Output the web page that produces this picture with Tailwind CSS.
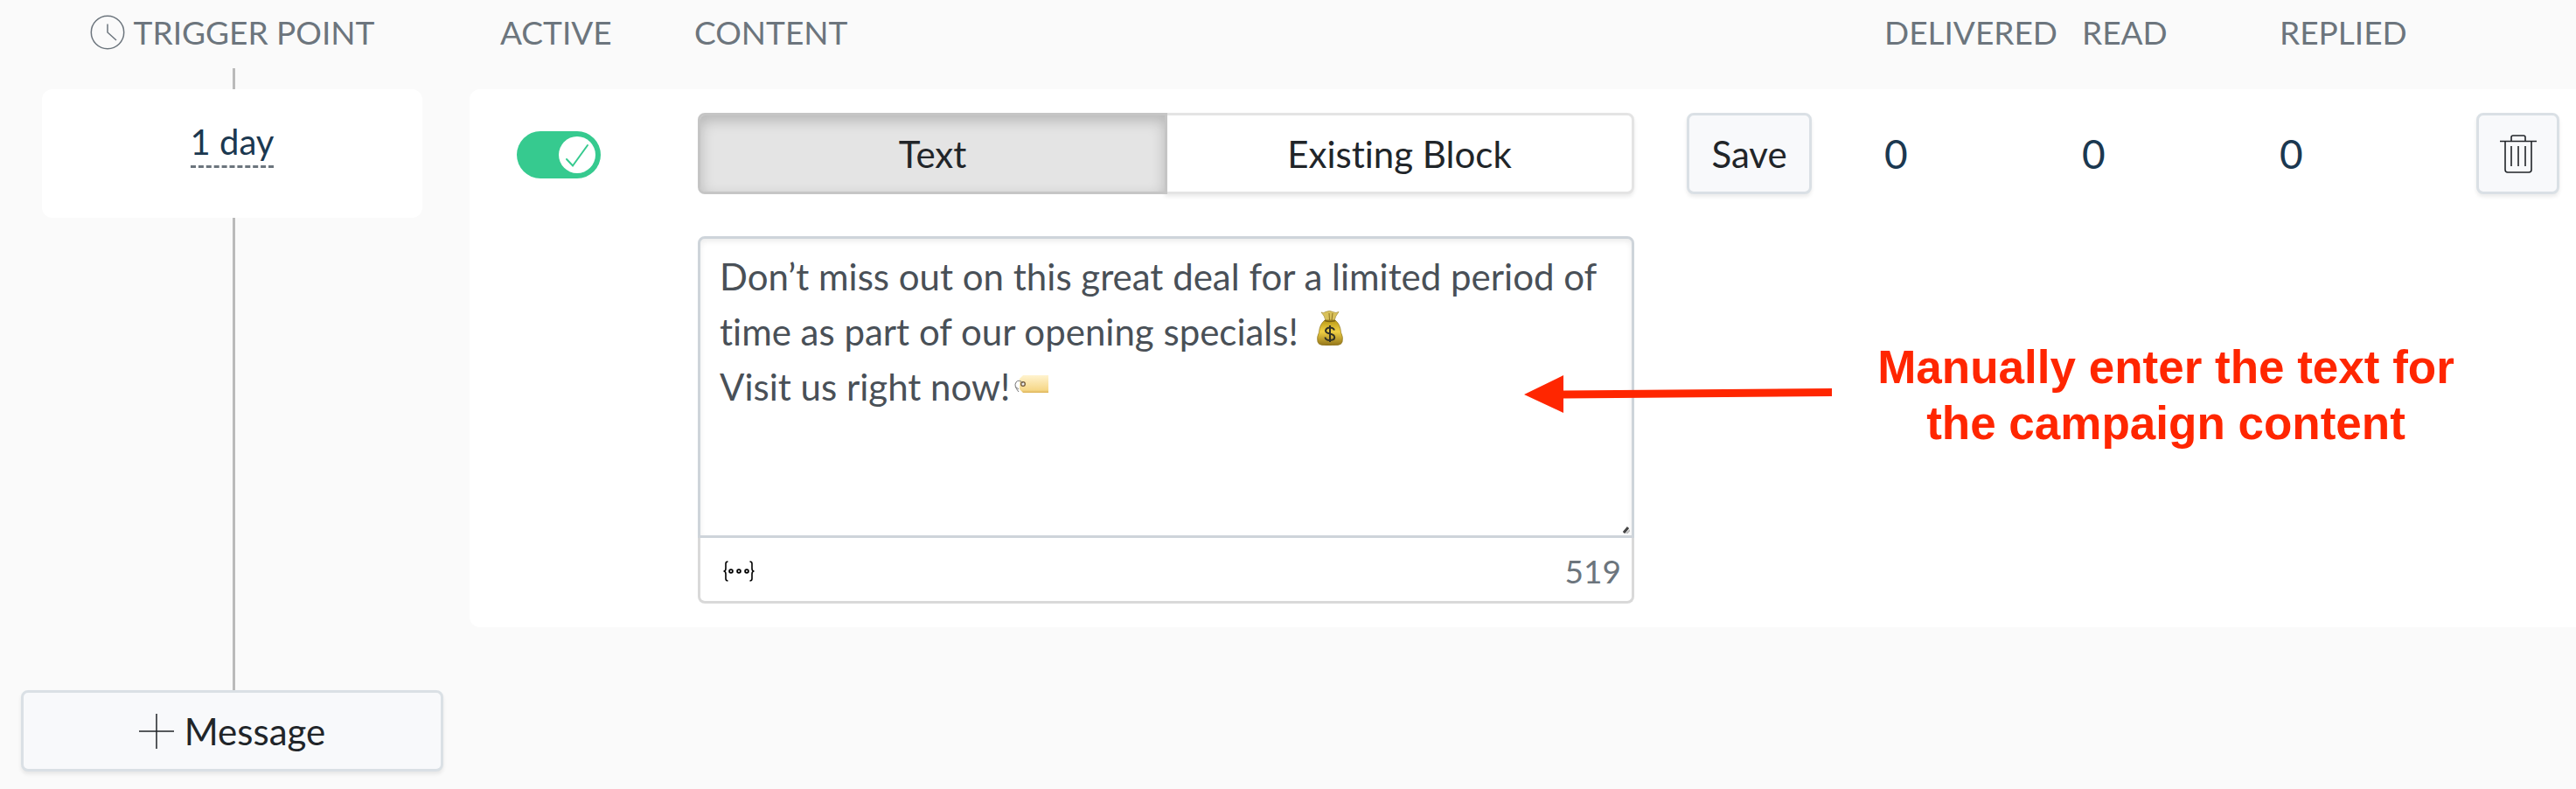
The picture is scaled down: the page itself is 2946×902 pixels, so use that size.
<!DOCTYPE html>
<html lang="en">
<head>
  <meta charset="UTF-8" />
  <meta name="viewport" content="width=device-width, initial-scale=1.0" />
  <title>Campaign Messages</title>
  <script src="https://cdn.jsdelivr.net/npm/@tailwindcss/browser@4"></script>
</head>
<body class="bg-[#fafafa] text-[#212529] font-['Lato',sans-serif] text-[42px] leading-[60px] [font-variant-ligatures:none]">
<div class="flex min-h-screen">

  <!-- Timeline -->
  <aside class="flex w-[531px] shrink-0 flex-col px-6 pb-5">
    <h2 class="mb-1 flex items-center justify-center gap-2.5 py-4 text-[37px] leading-[42px] text-[#6c757d]">
      <svg class="h-10 w-10" viewBox="0 0 40 40" fill="none" stroke="currentColor" stroke-width="1.5">
        <circle cx="20" cy="20" r="18.7" />
        <path d="M20 10.500V20l10 9" />
      </svg>
      TRIGGER POINT
    </h2>
    <div class="ml-auto h-6 w-1/2 border-l-[3px] border-[#bababa]"></div>
    <div class="mx-6 flex h-[147px] justify-center rounded-xl bg-white pt-[30px]">
      <a href="#" class="h-[60px] border-b-[3px] border-dashed border-[#6c757d] text-[40px] text-[#1b3850]">1 day</a>
    </div>
    <div class="ml-auto w-1/2 flex-1 border-l-[3px] border-[#bababa]"></div>
    <button class="flex h-[93px] items-center justify-center gap-3 rounded-lg border-[3px] border-[#dae0e5] bg-[#f8f9fb] shadow-[0_3px_4px_rgba(0,0,0,0.08)]">
      <svg class="h-10 w-10" viewBox="0 0 40 40" fill="none" stroke="currentColor" stroke-width="1.5">
        <path d="M20 0v40M0 20h40" />
      </svg>
      Message
    </button>
  </aside>

  <!-- Messages -->
  <main class="min-w-0 flex-1 pl-1.5">
    <div class="mb-7 grid grid-cols-[222px_1fr_226px_226px_226px_225px_114px] py-4 pl-[35px] text-[37px] leading-[42px] text-[#6c757d]">
      <span>ACTIVE</span>
      <span class="col-span-2">CONTENT</span>
      <span>DELIVERED</span>
      <span>READ</span>
      <span>REPLIED</span>
    </div>

    <section class="relative grid grid-cols-[261px_1fr_226px_226px_226px_225px_114px] rounded-l-xl bg-white py-[27px]">
      <!-- Active switch -->
      <div class="pt-[21px] pl-[54px]">
        <label class="flex h-[54px] w-24 items-center justify-end rounded-full bg-[#36ca8f] pr-1.5">
          <input type="checkbox" checked aria-label="Active" class="sr-only" />
          <svg class="h-[42px] w-[42px]" viewBox="0 0 42 42" fill="none">
            <circle cx="21" cy="21" r="21" fill="#fff" />
            <path d="M9 26l7 7.500L33 10" stroke="#36ca8f" stroke-width="2" stroke-linecap="round" />
          </svg>
        </label>
      </div>

      <!-- Content editor -->
      <div class="pr-[60px]">
        <div class="mb-12 flex h-[93px]">
          <button class="relative z-10 flex-1 rounded-l-lg border-[3px] border-[#c5c5c5] bg-[#e4e4e4] shadow-[inset_0_6px_16px_rgba(0,0,0,0.2)]">Text</button>
          <button class="-ml-[3px] flex-1 rounded-r-lg border-[3px] border-[#e4e4e4] bg-white shadow-[0_3px_4px_rgba(0,0,0,0.08)]">Existing Block</button>
        </div>
        <div class="relative">
          <textarea aria-label="Message text" class="block h-[345px] w-full resize-none overflow-hidden rounded-t-lg border-[3px] border-[#ced4da] px-[22px] py-3 leading-[63px] text-[#495057] shadow-[inset_0_3px_6px_rgba(0,0,0,0.08)]">Don’t miss out on this great deal for a limited period of time as part of our opening specials!
Visit us right now!</textarea>
          <!-- Money bag -->
          <svg class="absolute top-[85px] left-[708px] h-10 w-[30px]" viewBox="0 0 30 40">
            <defs>
              <linearGradient id="bag" x1="0" y1="0" x2="0" y2="1">
                <stop offset="0" stop-color="#b99a17" />
                <stop offset=".45" stop-color="#f0d044" />
                <stop offset="1" stop-color="#92741a" />
              </linearGradient>
            </defs>
            <path d="M5 2q3 1.500 5-.5 5-2 8 0 4 2 7 0-4 5-5 10H10Q9 6 5 2z" fill="#d9c15a" stroke="#a58d35" stroke-width=".7" />
            <path d="M14 3l.5 8M18 3l-1 8" stroke="#8f7523" stroke-width="1" />
            <path d="M9 11h12q6 5 6.500 14 3 5 1.500 11-1 3-5 3.500-9 1-18 0-4-.5-5-3.500-1.500-6 1.500-11Q3 16 9 11z" fill="url(#bag)" stroke="#8c731c" stroke-width=".7" />
            <path d="M9 11.500q6 2 12 0" fill="none" stroke="#7a6215" stroke-width="1.500" />
            <path d="M20 22.500q-1-3-5-3t-5 3.200q0 2.800 5 3.800t5.200 4q0 3.500-5.200 3.500t-5.500-3.500M15 17v19" fill="none" stroke="#2f3026" stroke-width="2" />
          </svg>
          <!-- Price tag -->
          <svg class="absolute top-[158px] left-[362px] h-[22px] w-10" viewBox="0 0 40 22">
            <defs>
              <linearGradient id="tag" x1="0" y1="0" x2="0" y2="1">
                <stop offset="0" stop-color="#fff3cf" />
                <stop offset=".85" stop-color="#f6d787" />
                <stop offset="1" stop-color="#dcb255" />
              </linearGradient>
            </defs>
            <path d="M10 1h29v20H10l-4-4V5z" fill="url(#tag)" />
            <circle cx="10" cy="11" r="2.300" fill="#eee" stroke="#6e5638" stroke-width="1.300" />
            <path d="M10 10Q5 5 2 9t3 11M1 14l4 3" fill="none" stroke="#777" stroke-width="1" />
          </svg>
          <!-- Resize grip -->
          <svg class="absolute right-[5px] bottom-[5px] h-2 w-2" viewBox="0 0 8 8" fill="none">
            <path d="M1 7l5-6" stroke="#444" stroke-width="3" />
            <path d="M4 8l4-4" stroke="#bbb" stroke-width="2" />
          </svg>
        </div>
        <div class="flex h-[75px] items-center justify-between rounded-b-lg border-[3px] border-t-0 border-[#d9d9d9] pt-1 pr-3 pl-[26px] text-[37px] text-[#6c757d]">
          <button aria-label="Insert attribute">
            <svg class="h-6 w-9" viewBox="0 0 36 24" fill="none" stroke="#000">
              <path d="M5.500 1Q3 1 3 3.500V9q0 3-2.500 3Q3 12 3 15v5.500Q3 23 5.500 23M30.500 1Q33 1 33 3.500V9q0 3 2.500 3-2.500 0-2.500 3v5.500q0 2.500-2.500 2.500" stroke-width="1.600" />
              <g stroke-width="1.800">
                <circle cx="9" cy="12" r="1.900" />
                <circle cx="18" cy="12" r="1.900" />
                <circle cx="27" cy="12" r="1.900" />
              </g>
            </svg>
          </button>
          <span>519</span>
        </div>
      </div>

      <div>
        <button class="h-[93px] w-[143px] rounded-lg border-[3px] border-[#dae0e5] bg-[#f8f9fb] shadow-[0_3px_4px_rgba(0,0,0,0.08)]">Save</button>
      </div>

      <!-- Stats -->
      <span class="text-[46px] leading-[93px] text-[#1b3850]">0</span>
      <span class="text-[46px] leading-[93px] text-[#1b3850]">0</span>
      <span class="text-[46px] leading-[93px] text-[#1b3850]">0</span>

      <div>
        <button aria-label="Delete message" class="flex h-[93px] w-[95px] items-center justify-center rounded-lg border-[3px] border-[#dae0e5] bg-[#f8f9fb] shadow-[0_3px_4px_rgba(0,0,0,0.08)]">
          <svg class="h-11 w-[42px]" viewBox="0 0 42 44" fill="none" stroke="#212529" stroke-width="1.600">
            <path d="M0 7.500h42M13 7.500V3q0-2 2-2h12q2 0 2 2v4.500M6 7.500V40q0 3 3 3h24q3 0 3-3V7.500M13 13v23M21 13v23M29 13v23" />
          </svg>
        </button>
      </div>

      <!-- Callout -->
      <svg class="absolute top-[326px] right-[851px] h-12 w-[352px]" viewBox="0 0 352 48" fill="#ff2600">
        <path d="M0 23L45 1v17.500L352 16v9L45 27.500V44z" />
      </svg>
      <p class="absolute top-[286px] right-[119px] w-[700px] text-center font-['Liberation_Sans',sans-serif] text-[53px] leading-[64px] font-bold text-[#ff2600]">Manually enter the text for<br />the campaign content</p>
    </section>
  </main>
</div>
</body>
</html>
